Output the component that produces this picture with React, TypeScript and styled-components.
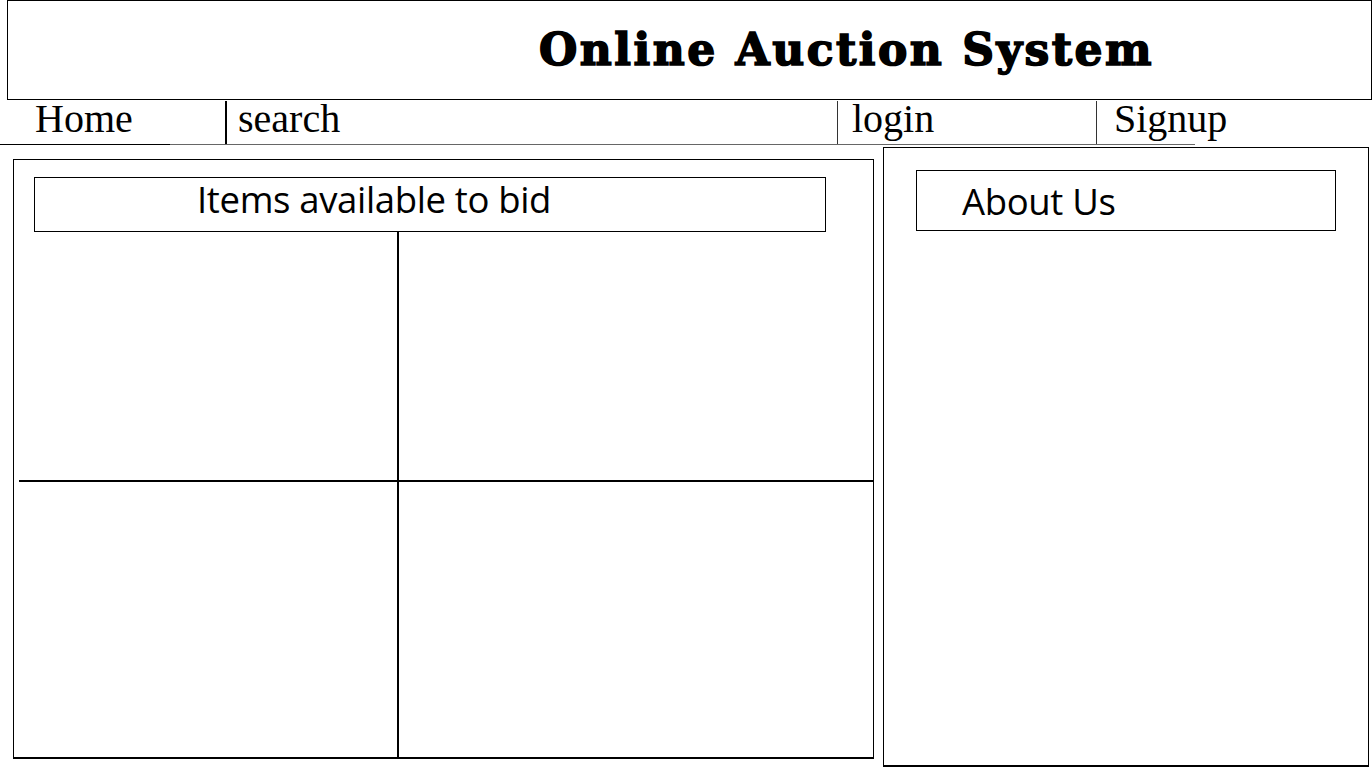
import React from "react";
import styled, { createGlobalStyle } from "styled-components";

const Global = createGlobalStyle`
  html, body { margin: 0; padding: 0; background: #fff; }
  body { width: 1372px; height: 767px; overflow: hidden; }
`;

const Page = styled.div`
  width: 1372px;
  height: 767px;
  display: flex;
  flex-direction: column;
  background: #fff;
  color: #000;
`;

const Header = styled.header`
  box-sizing: border-box;
  margin-left: 7px;
  width: 1365px;
  height: 101px;
  border: 1px solid #000;
  display: flex;
  align-items: center;
  padding-left: 531px;
`;

const Title = styled.h1`
  margin: 0;
  font-family: "DejaVu Serif", serif;
  font-weight: 900;
  font-size: 44px;
  letter-spacing: 2.5px;
  line-height: 1;
  -webkit-text-stroke: 1.6px #000;
  white-space: nowrap;
`;

const Nav = styled.nav`
  box-sizing: border-box;
  width: 1195px;
  height: 45px;
  display: flex;
  border-bottom: 1px solid #666;
  position: relative;
  &::after {
    content: "";
    position: absolute;
    left: 0;
    bottom: -1px;
    width: 170px;
    height: 1px;
    background: #000;
  }
`;

const NavItem = styled.div<{ $w: number; $pad: number; $sep?: "none" | "thick" | "thin" }>`
  box-sizing: border-box;
  flex: 0 0 ${(p) => p.$w}px;
  padding-left: ${(p) => p.$pad}px;
  border-left: ${(p) =>
    p.$sep === "thick" ? "2px solid #000" : p.$sep === "thin" ? "1px solid #333" : "none"};
  margin-top: 1px;
  font-family: "Liberation Serif", serif;
  font-size: 40px;
  line-height: 36px;
  white-space: nowrap;
`;

const Main = styled.main`
  display: flex;
  align-items: flex-start;
`;

const ItemsPanel = styled.section`
  box-sizing: border-box;
  margin: 14px 0 0 13px;
  width: 861px;
  height: 600px;
  border: 1px solid #000;
  border-bottom-width: 2px;
  display: flex;
  flex-direction: column;
`;

const BoxTitle = styled.div<{ $w: number; $h: number; $pad: number; $mt: number; $ml: number; $lift: number }>`
  box-sizing: border-box;
  width: ${(p) => p.$w}px;
  height: ${(p) => p.$h}px;
  margin: ${(p) => p.$mt}px 0 0 ${(p) => p.$ml}px;
  padding-left: ${(p) => p.$pad}px;
  padding-bottom: ${(p) => p.$lift}px;
  border: 1px solid #000;
  display: flex;
  align-items: center;
  font-family: "Open Sans", sans-serif;
  font-size: 36.5px;
  letter-spacing: -0.35px;
  flex-shrink: 0;
  white-space: nowrap;
`;

const Grid = styled.div`
  flex: 1;
  margin-left: 5px;
  display: grid;
  grid-template-columns: 380px 1fr;
  grid-template-rows: 250px 1fr;
`;

const Cell = styled.div<{ $right?: boolean; $bottom?: boolean }>`
  border-right: ${(p) => (p.$right ? "2px solid #000" : "none")};
  border-bottom: ${(p) => (p.$bottom ? "2px solid #000" : "none")};
`;

const AboutPanel = styled.aside`
  box-sizing: border-box;
  margin: 2px 0 0 9px;
  width: 486px;
  height: 620px;
  border: 1px solid #000;
  border-bottom-width: 2px;
  display: flex;
  flex-direction: column;
`;

export default function App() {
  return (
    <>
      <Global />
      <Page>
        <Header>
          <Title>Online Auction System</Title>
        </Header>
        <Nav>
          <NavItem $w={225} $pad={35} $sep="none">Home</NavItem>
          <NavItem $w={612} $pad={11} $sep="thick">search</NavItem>
          <NavItem $w={259} $pad={14} $sep="thin">login</NavItem>
          <NavItem $w={99} $pad={17} $sep="thin">Signup</NavItem>
        </Nav>
        <Main>
          <ItemsPanel>
            <BoxTitle $w={792} $h={55} $pad={162} $mt={17} $ml={20} $lift={11}>
              Items available to bid
            </BoxTitle>
            <Grid>
              <Cell $right $bottom />
              <Cell $bottom />
              <Cell $right />
              <Cell />
            </Grid>
          </ItemsPanel>
          <AboutPanel>
            <BoxTitle $w={420} $h={61} $pad={45} $mt={22} $ml={32} $lift={0}>
              About Us
            </BoxTitle>
          </AboutPanel>
        </Main>
      </Page>
    </>
  );
}
